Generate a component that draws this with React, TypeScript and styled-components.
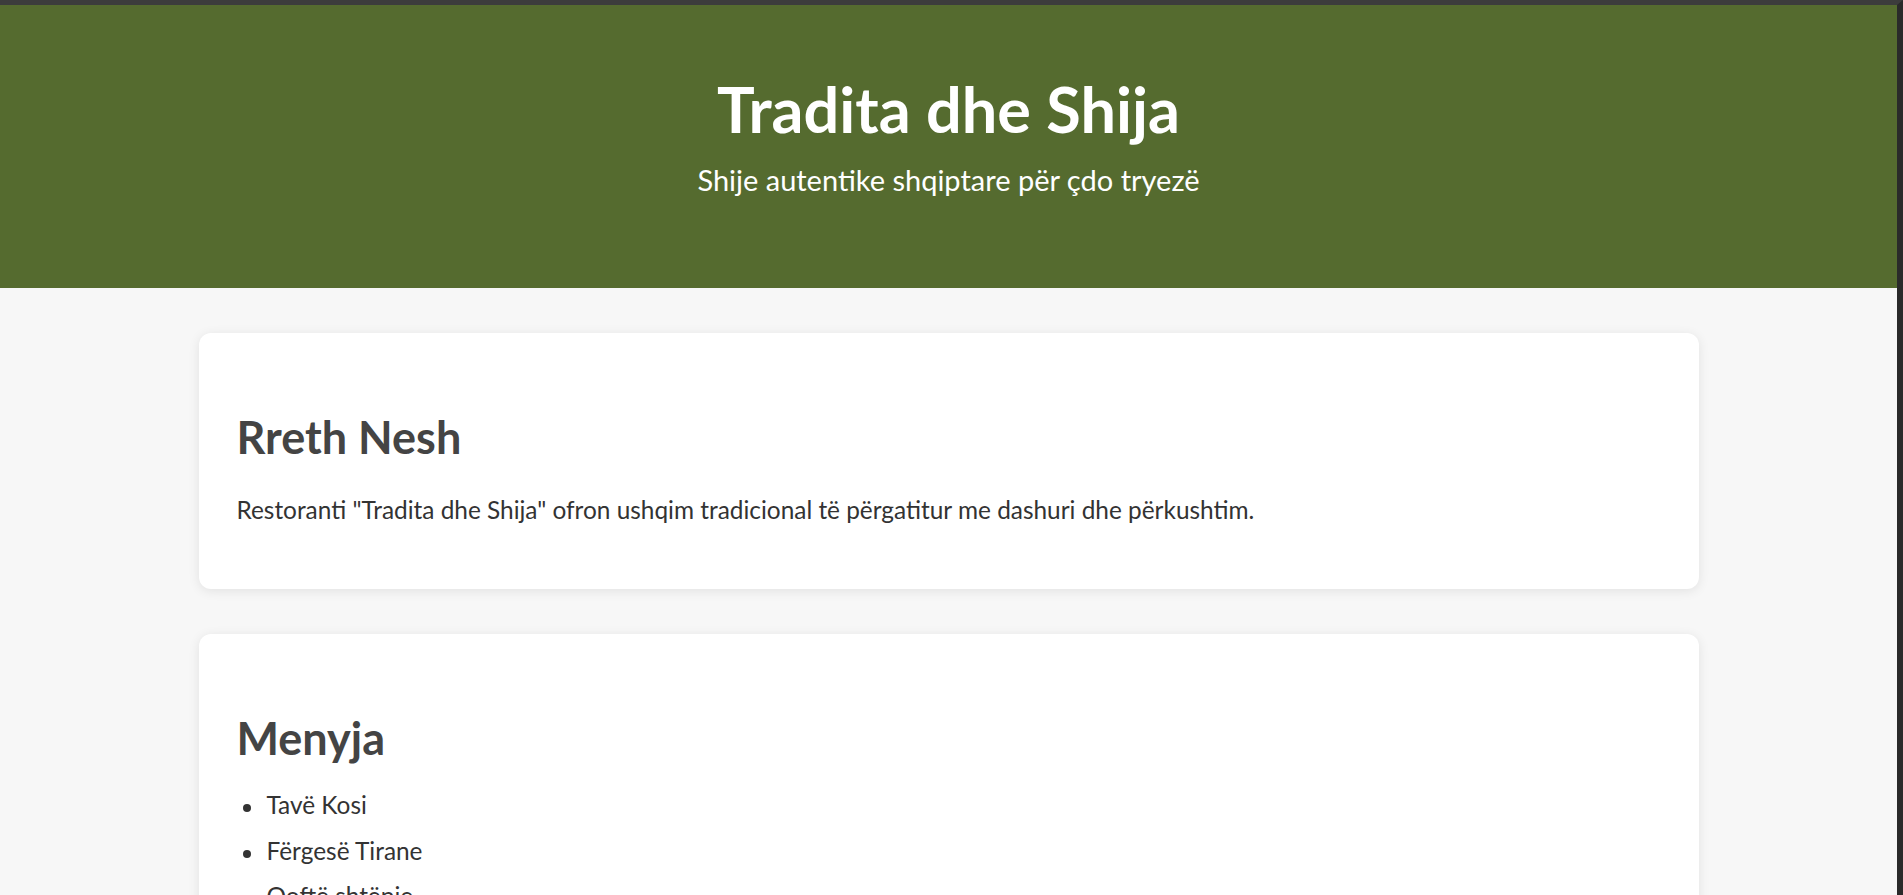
import React from "react";
import styled, { createGlobalStyle } from "styled-components";

const GlobalStyle = createGlobalStyle`
  html, body {
    margin: 0;
    padding: 0;
    background: #f7f7f7;
    scrollbar-width: none;
  }
  html::-webkit-scrollbar, body::-webkit-scrollbar {
    display: none;
  }
  * {
    box-sizing: border-box;
  }
`;

const Page = styled.div`
  min-height: 100vh;
  border-top: 5px solid #3c3c3c;
  border-right: 6px solid #2a2a2a;
  background: #f7f7f7;
  font-family: "Lato", "Open Sans", sans-serif;
  color: #333333;
`;

const Header = styled.header`
  background: #556b2f;
  color: #ffffff;
  text-align: center;
  padding: 66px 20px 91px;
`;

const Title = styled.h1`
  margin: 0;
  font-size: 63px;
  line-height: 1.2;
  font-weight: 700;
`;

const Subtitle = styled.p`
  margin: 16px 0 0;
  font-size: 29px;
  line-height: 1.2;
  font-weight: 400;
`;

const Main = styled.main`
  max-width: 1500px;
  margin: 45px auto 0;
  display: flex;
  flex-direction: column;
  gap: 45px;
  padding-bottom: 45px;
`;

const Card = styled.section`
  background: #ffffff;
  border-radius: 12px;
  box-shadow: 0 2px 12px rgba(0, 0, 0, 0.09);
  padding: 38px 38px;
`;

const SectionTitle = styled.h2`
  margin: 39px 0 0;
  font-size: 45px;
  line-height: 1.2;
  font-weight: 700;
  color: #444444;
`;

const Text = styled.p`
  margin: 28px 0 22px;
  font-size: 24.4px;
  line-height: 1.5;
`;

const MenuList = styled.ul`
  margin: 22px 0 22px;
  padding: 0;
  list-style: none;
`;

const MenuItem = styled.li`
  display: flex;
  align-items: flex-start;
  gap: 16px;
  font-size: 24.4px;
  line-height: 1.5;
  margin-bottom: 9px;
  &::before {
    content: "";
    flex: none;
    width: 8px;
    height: 8px;
    margin: 17px 0 0 6px;
    border-radius: 50%;
    background: #333333;
  }
`;

const menu = ["Tavë Kosi", "Fërgesë Tirane", "Qoftë shtëpie"];

export default function App() {
  return (
    <>
      <GlobalStyle />
      <Page>
        <Header>
          <Title>Tradita dhe Shija</Title>
          <Subtitle>Shije autentike shqiptare për çdo tryezë</Subtitle>
        </Header>
        <Main>
          <Card>
            <SectionTitle>Rreth Nesh</SectionTitle>
            <Text>
              Restoranti "Tradita dhe Shija" ofron ushqim tradicional të përgatitur me dashuri dhe përkushtim.
            </Text>
          </Card>
          <Card>
            <SectionTitle>Menyja</SectionTitle>
            <MenuList>
              {menu.map((m) => (
                <MenuItem key={m}>{m}</MenuItem>
              ))}
            </MenuList>
          </Card>
        </Main>
      </Page>
    </>
  );
}
